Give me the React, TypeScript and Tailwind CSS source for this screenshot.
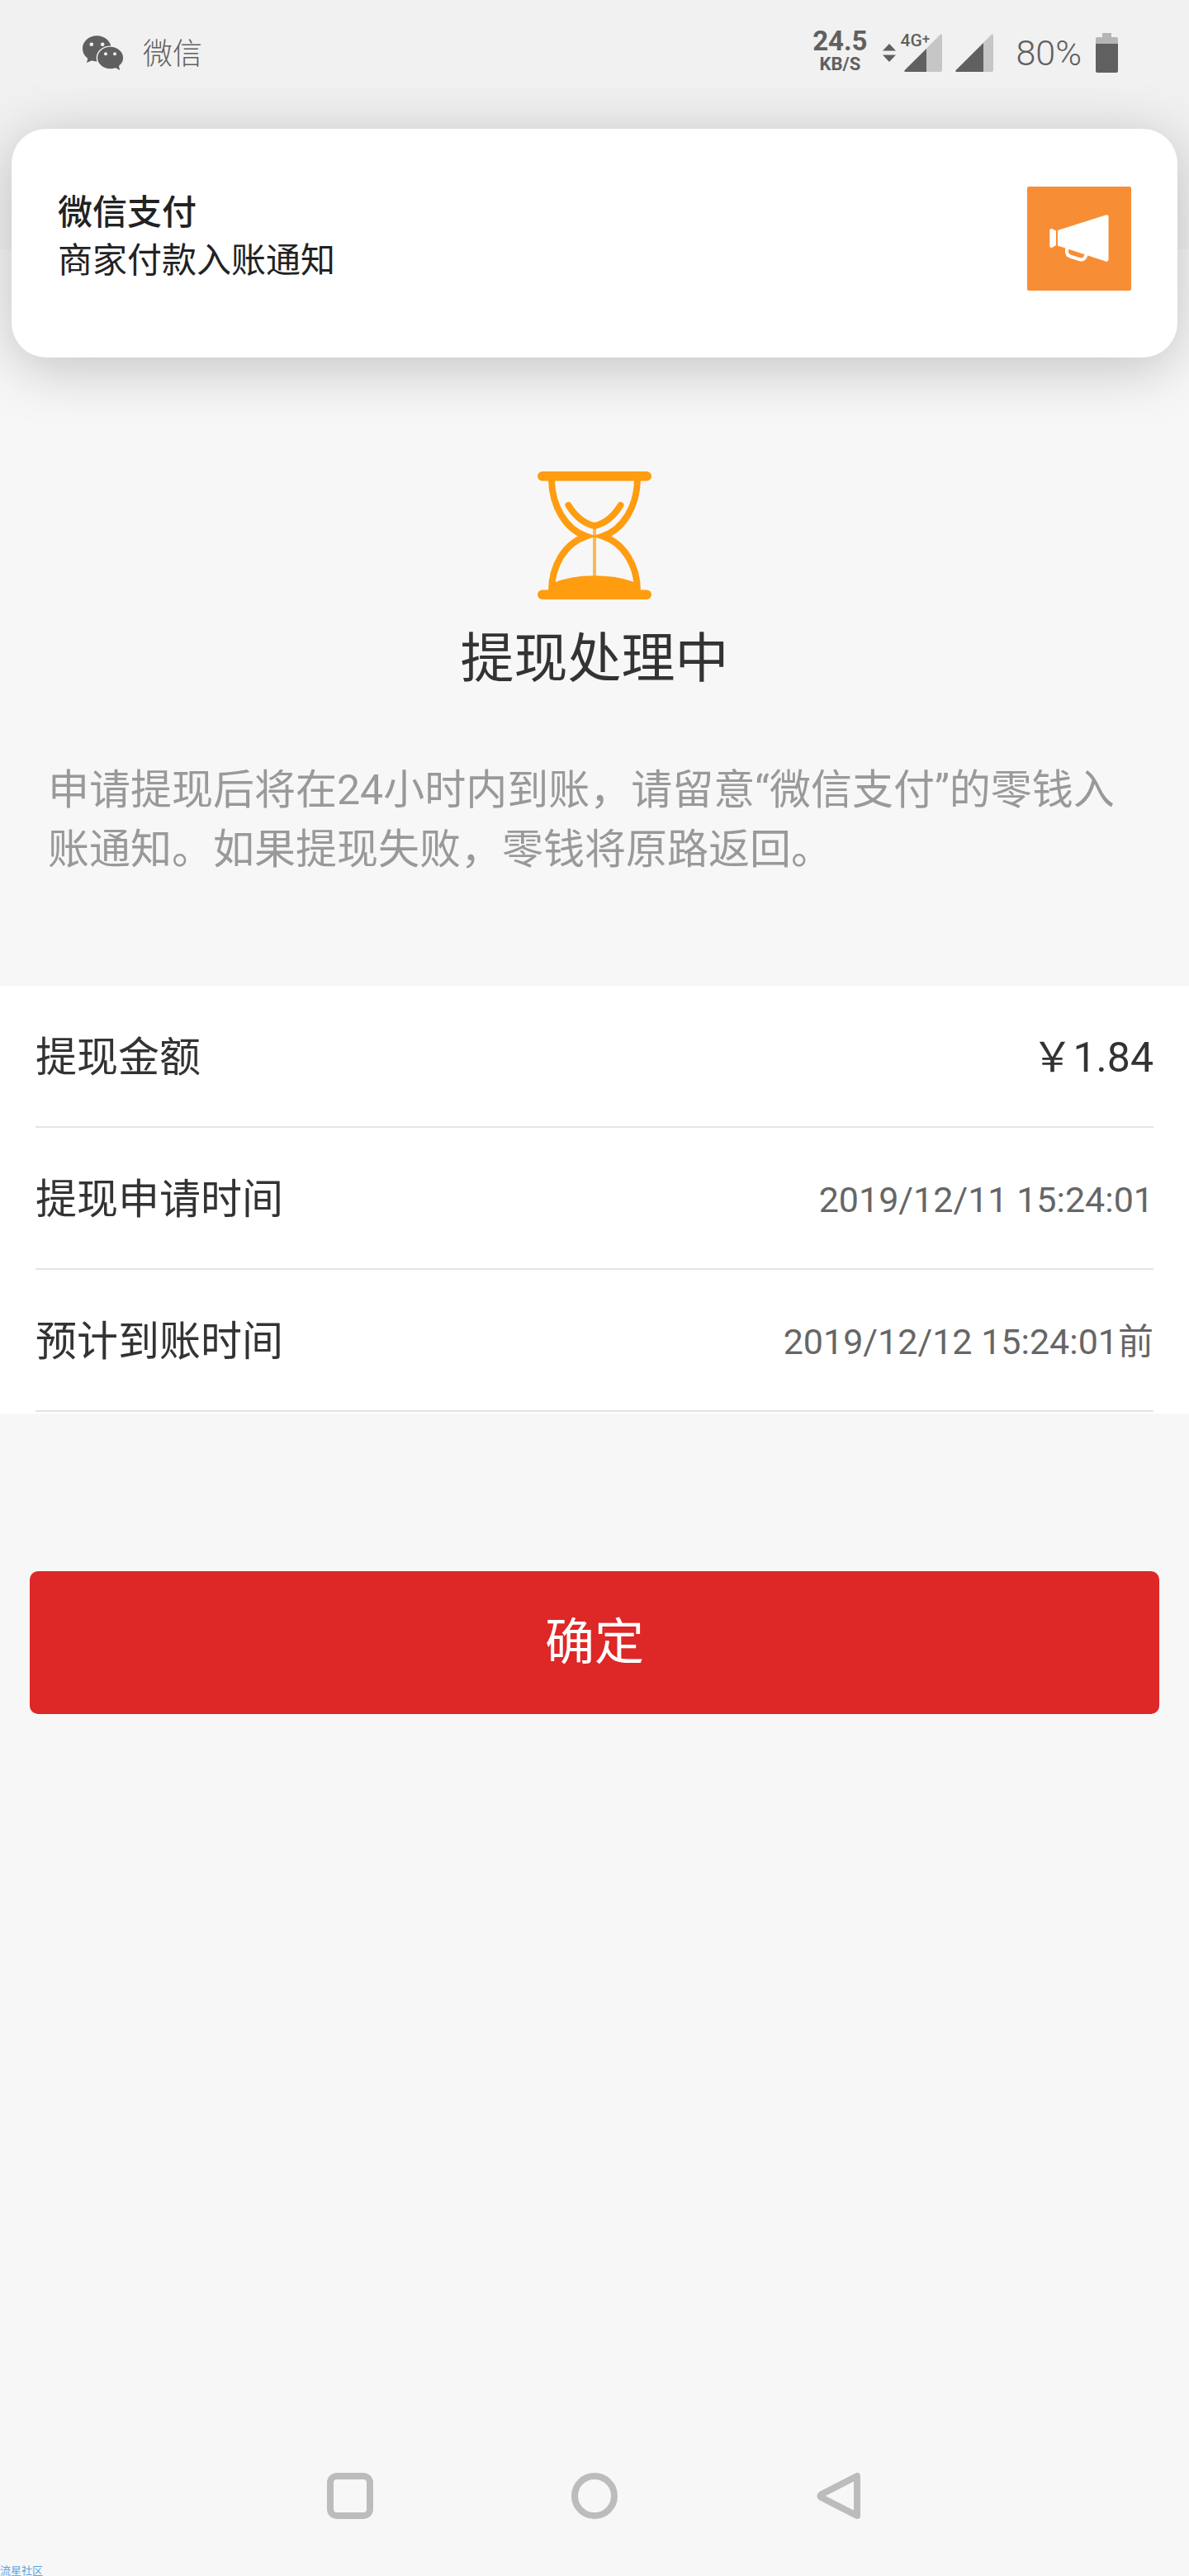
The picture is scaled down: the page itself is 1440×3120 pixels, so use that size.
import React from "react";

const details = [
  { label: "提现金额", value: "￥1.84", amount: true },
  { label: "提现申请时间", value: "2019/12/11 15:24:01", amount: false },
  { label: "预计到账时间", value: "2019/12/12 15:24:01前", amount: false },
];

function WechatIcon() {
  return (
    <svg width="50" height="42" viewBox="0 0 50 42">
      <path d="M7 25L5 33L14 29Z" fill="#606060" />
      <ellipse cx="17.3" cy="15.8" rx="17.3" ry="15.6" fill="#606060" />
      <ellipse cx="33.6" cy="27" rx="17" ry="14.6" fill="#f1f1f1" />
      <ellipse cx="33.6" cy="27" rx="15.5" ry="13.2" fill="#606060" />
      <path d="M38 38L45 42L43.5 34Z" fill="#606060" />
      <g fill="#f1f1f1">
        <circle cx="10.8" cy="10.7" r="2.3" />
        <circle cx="24.2" cy="10.7" r="2.3" />
        <circle cx="28" cy="22.2" r="2" />
        <circle cx="39" cy="22.2" r="2" />
      </g>
    </svg>
  );
}

function Signal({ level }: { level: number }) {
  return (
    <svg width="46" height="46" viewBox="0 0 46 46">
      <path
        d="M44 .5Q46 0 46 2V44Q46 46 44 46H1.5Q-.5 46 .8 44Z"
        fill="#c6c6c6"
      />
      <path d={`M${level} ${45 - level}V46H1.5Q-.5 46 .8 44Z`} fill="#606060" />
    </svg>
  );
}

function StatusBar() {
  return (
    <div className="flex h-32 items-center justify-between pl-[100px] pr-[86px] text-[#606060]">
      <div className="flex items-center gap-[23px]">
        <WechatIcon />
        <span className="pt-1 text-[36px] font-light leading-10">微信</span>
      </div>
      <div className="flex items-center">
        <div className="flex flex-col items-center pb-1 font-bold">
          <span className="text-[33px] leading-8">24.5</span>
          <span className="text-[22px] leading-6">KB/S</span>
        </div>
        <svg className="ml-[18px]" width="16" height="22" viewBox="0 0 16 22">
          <path d="M8 0L16 8.5H0ZM8 22L0 13.5H16Z" fill="#606060" />
        </svg>
        <div className="relative ml-[10px]">
          <Signal level={27} />
          <span className="absolute -left-1 -top-1 flex text-[21px] font-medium leading-6">
            4G<sup className="top-0 text-[17px] leading-5">+</sup>
          </span>
        </div>
        <div className="ml-4">
          <Signal level={34} />
        </div>
        <span className="ml-7 text-[43px] font-light leading-10">80%</span>
        <svg className="ml-[17px]" width="27" height="48" viewBox="0 0 27 48">
          <path d="M0 13V7Q0 5 2 5H8V0H19V5H25Q27 5 27 7V13Z" fill="#b5b5b5" />
          <path d="M0 13H27V46Q27 48 25 48H2Q0 48 0 46Z" fill="#606060" />
        </svg>
      </div>
    </div>
  );
}

function Notification() {
  return (
    <section className="absolute inset-x-[14px] top-[156px] flex justify-between rounded-[42px] bg-white px-14 pb-[81px] pt-[70px] shadow-[0_12px_70px_rgba(0,0,0,0.22)]">
      <div className="pt-[3px] text-[42px] leading-[58px] text-[#222]">
        <h2 className="font-medium">微信支付</h2>
        <p>商家付款入账通知</p>
      </div>
      <svg width="126" height="126" viewBox="0 0 126 126">
        <rect width="126" height="126" rx="2" fill="#f78e35" />
        <path
          d="M37 53L95 34.5Q98.5 33.5 98.5 37V87.5Q98.5 91.5 95 90.5L37 71.5Z"
          fill="#fff"
        />
        <path
          d="M27.3 53Q27.3 50.5 30 51L35 53.5V71L30 74Q27.3 74.5 27.3 72Z"
          fill="#fff"
        />
        <path
          d="M48 75V79Q48 83 52 84.5L63 88Q68 89.5 70 86L72.5 81"
          fill="none"
          stroke="#fff"
          strokeWidth="4"
        />
      </svg>
    </section>
  );
}

function Hourglass() {
  return (
    <svg width="138" height="155" viewBox="0 0 138 155">
      <line x1="69" y1="66" x2="69" y2="128" stroke="#ffb753" strokeWidth="4" />
      <g fill="none" stroke="#ff9c10" strokeWidth="8" strokeLinecap="round">
        <path d="M17 10C17.5 42 34 70 59 78.5C33 87 17 114 17 145" />
        <path d="M121 10C120.5 42 104 70 79 78.5C105 87 121 114 121 145" />
        <path d="M37.5 41C46 55 56 63 69 66C82 63 92 55 100.5 41" />
      </g>
      <g fill="#ff9c10">
        <rect width="138" height="11.5" rx="5.7" />
        <rect y="143.5" width="138" height="11.5" rx="5.7" />
        <path d="M17 145V136Q38 126.3 69 126.3T121 136V145Z" />
      </g>
    </svg>
  );
}

function NavBar() {
  return (
    <nav className="mt-auto flex justify-center gap-[238px] pb-[68px]">
      <button aria-label="Recent apps">
        <svg width="58" height="58" viewBox="0 0 58 58">
          <rect x="5" y="5" width="48" height="48" rx="8" fill="none" stroke="#bcbcbc" strokeWidth="8" />
        </svg>
      </button>
      <button aria-label="Home">
        <svg width="58" height="58" viewBox="0 0 58 58">
          <circle cx="29" cy="29" r="24" fill="none" stroke="#bcbcbc" strokeWidth="8" />
        </svg>
      </button>
      <button aria-label="Back">
        <svg width="58" height="58" viewBox="0 0 58 58">
          <path
            d="M51 5V53L8 31Q5 29 8 27Z"
            fill="none"
            stroke="#bcbcbc"
            strokeWidth="8"
            strokeLinejoin="round"
          />
        </svg>
      </button>
    </nav>
  );
}

export default function App() {
  return (
    <div className="relative flex min-h-screen flex-col overflow-hidden bg-[#f7f7f7] font-[Roboto,'Noto_Sans_CJK_SC',sans-serif]">
      <header className="h-[302px] bg-[#f1f1f1]">
        <StatusBar />
        <Notification />
      </header>

      <main>
        <div className="flex flex-col items-center px-[58px] pt-[269px]">
          <Hourglass />
          <h1 className="mt-6 text-[65px] leading-[96px] text-[#333]">
            提现处理中
          </h1>
          <p className="mt-[75px] w-full text-[50px] leading-[72px] text-[#999]">
            申请提现后将在24小时内到账，请留意“微信支付”的零钱入账通知。如果提现失败，零钱将原路返回。
          </p>
        </div>

        <dl className="mt-[129px] bg-white px-[43px] pb-[2px]">
          {details.map((item) => (
            <div
              key={item.label}
              className="flex h-[172px] items-center justify-between border-b-2 border-[#e4e4e4] pt-1"
            >
              <dt className="text-[50px] text-[#333]">{item.label}</dt>
              <dd
                className={
                  item.amount ? "text-[50px] text-[#333]" : "text-[43px] text-[#666]"
                }
              >
                {item.value}
              </dd>
            </div>
          ))}
        </dl>

        <div className="px-9 pt-[191px]">
          <button className="h-[173px] w-full rounded-[10px] bg-[#de2727] text-[60px] text-white">
            确定
          </button>
        </div>
      </main>

      <NavBar />
      <span className="absolute -bottom-1 left-0 text-[13px] leading-5 text-[#5aa5e6]">
        流星社区
      </span>
    </div>
  );
}
